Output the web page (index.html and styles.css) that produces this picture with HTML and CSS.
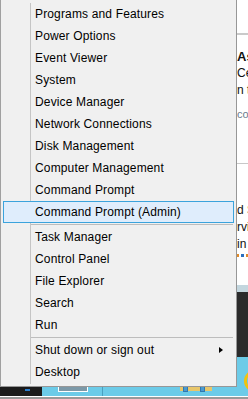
FILE: index.html
```html
<!DOCTYPE html>
<html>
<head>
<meta charset="utf-8">
<link rel="stylesheet" href="styles.css">
</head>
<body>
<div class="desktop">
  <div class="window">
    <div class="win-head"></div>
    <div class="win-body">
      <div class="t bold">As</div>
      <div class="t">Ce</div>
      <div class="t">n t</div>
      <div class="t muted">co</div>
      <div class="rule"></div>
      <div class="t t2">d S</div>
      <div class="t">rvi</div>
      <div class="t">in</div>
      <div class="icons"><span class="ic o"></span><span class="ic b"></span><span class="ic o"></span></div>
    </div>
    <div class="win-foot"></div>
    <div class="dark"></div>
  </div>
  <div class="taskbar">
    <div class="tb-start"><span class="tb-blue"></span></div>
    <div class="tb-area">
      <span class="tb-win"></span>
      <span class="tb-divider"></span>
      <span class="tb-folder"><i></i><i></i></span>
      <span class="tb-ring"></span>
    </div>
  </div>
  <div class="bottom-line"></div>
</div>

<div class="menu">
  <ul class="group">
    <li class="item">Programs and Features</li>
    <li class="item">Power Options</li>
    <li class="item">Event Viewer</li>
    <li class="item">System</li>
    <li class="item">Device Manager</li>
    <li class="item">Network Connections</li>
    <li class="item">Disk Management</li>
    <li class="item">Computer Management</li>
    <li class="item">Command Prompt</li>
    <li class="item active">Command Prompt (Admin)</li>
  </ul>
  <div class="sep"></div>
  <ul class="group">
    <li class="item">Task Manager</li>
    <li class="item">Control Panel</li>
    <li class="item">File Explorer</li>
    <li class="item">Search</li>
    <li class="item">Run</li>
  </ul>
  <div class="sep"></div>
  <ul class="group">
    <li class="item submenu">Shut down or sign out<span class="arrow"></span></li>
    <li class="item">Desktop</li>
  </ul>
</div>
</body>
</html>
```
FILE: styles.css
```css
* { box-sizing: border-box; }
html, body { margin: 0; padding: 0; }
body {
  width: 248px;
  height: 399px;
  overflow: hidden;
  background: #ffffff;
  font-family: "Liberation Sans", Arial, sans-serif;
  font-size: 12px;
  color: #000;
  position: relative;
}

/* background desktop */
.desktop { display: flex; flex-direction: column; height: 399px; }
.window {
  height: 357px;
  flex: none;
  display: flex;
  flex-direction: column;
  padding-left: 237px;
  overflow: hidden;
  background: #fff;
}
.win-head { height: 35px; border-bottom: 2px solid #cacaca; flex: none; }
.win-body { flex: none; height: 217px; padding-top: 14px; white-space: nowrap; }
.t { font-size: 12px; line-height: 15px; height: 16px; color: #111; }
.t + .t { margin-top: 1px; }
.bold { font-weight: bold; font-size: 13px; }
.muted { color: #6b7a8c; margin-top: 8px !important; font-size: 11px; }
.rule { height: 1px; background: #c8c8c8; margin-top: 40px; }
.t2 { margin-top: 39px; }
.icons { display: flex; gap: 2px; margin-top: 1px; }
.ic { width: 3px; height: 3px; }
.ic.o { background: #e08a2a; }
.ic.b { background: #2a6fc0; }
.win-foot { height: 40px; border-bottom: 7px solid #c3d6de; flex: none; }
.dark { flex: 1; background: #2b2b2b; }

.taskbar { display: flex; height: 39px; flex: none; }
.tb-start { width: 42px; background: #1b1b1b; position: relative; flex: none; }
.tb-blue { position: absolute; left: 25px; top: 32px; width: 5px; height: 2px; background: #2a7fd0; }
.tb-area { flex: 1; background: #6ccbe8; position: relative; overflow: hidden; }
.tb-win { position: absolute; left: 16px; top: 22px; width: 30px; height: 13px; border: 1px solid #fff; background: #7c99a8; }
.tb-divider { position: absolute; left: 60px; top: 0; width: 1px; height: 39px; background: #4aa0c0; }
.tb-folder { position: absolute; left: 138px; top: 20px; width: 32px; height: 14px; background: #e8c66a; }
.tb-folder i { position: absolute; top: 9px; width: 5px; height: 6px; background: #4a9ad0; display: block; border: 1px solid #2f78b0; }
.tb-folder i:first-child { left: 3px; }
.tb-folder i:last-child { left: 20px; }
.tb-ring { position: absolute; left: 202px; top: 13px; width: 22px; height: 22px; border: 3px solid #f2c20c; border-radius: 50%; }
.bottom-line { height: 3px; border-top: 1px solid #fff; background: #9a9a9a; flex: none; }

/* popup menu overlaying the desktop */
.menu {
  position: absolute;
  left: 0;
  top: 0;
  width: 237px;
  height: 387px;
  background: #f0f0f0;
  border-left: 1px solid #a0a0a0;
  border-right: 1px solid #979797;
  border-bottom: 1px solid #979797;
  padding: 3px 0 2px 0;
  background-image: linear-gradient(#c5c5c5, #c5c5c5);
  background-size: 1px calc(100% - 5px);
  background-position: 29px 3px;
  background-repeat: no-repeat;
}
.group { list-style: none; margin: 0; padding: 0; }
.item {
  height: 22px;
  line-height: 22px;
  padding-left: 32px;
  margin: 0 2px;
  position: relative;
  letter-spacing: 0.15px;
  white-space: nowrap;
}
.item.active {
  background: #dfedfc;
  border: 1px solid #3ba3dc;
  line-height: 20px;
  padding-left: 31px;
}
.arrow {
  position: absolute;
  right: 11px;
  top: 8px;
  width: 0; height: 0;
  border-top: 3.5px solid transparent;
  border-bottom: 3.5px solid transparent;
  border-left: 4px solid #000;
}
.sep {
  height: 3px;
  margin-left: 30px;
  margin-right: 3px;
  border-top: 1px solid #f0f0f0;
  background: linear-gradient(#bdbdbd, #bdbdbd) 0 0 / 100% 1px no-repeat;
}
```
